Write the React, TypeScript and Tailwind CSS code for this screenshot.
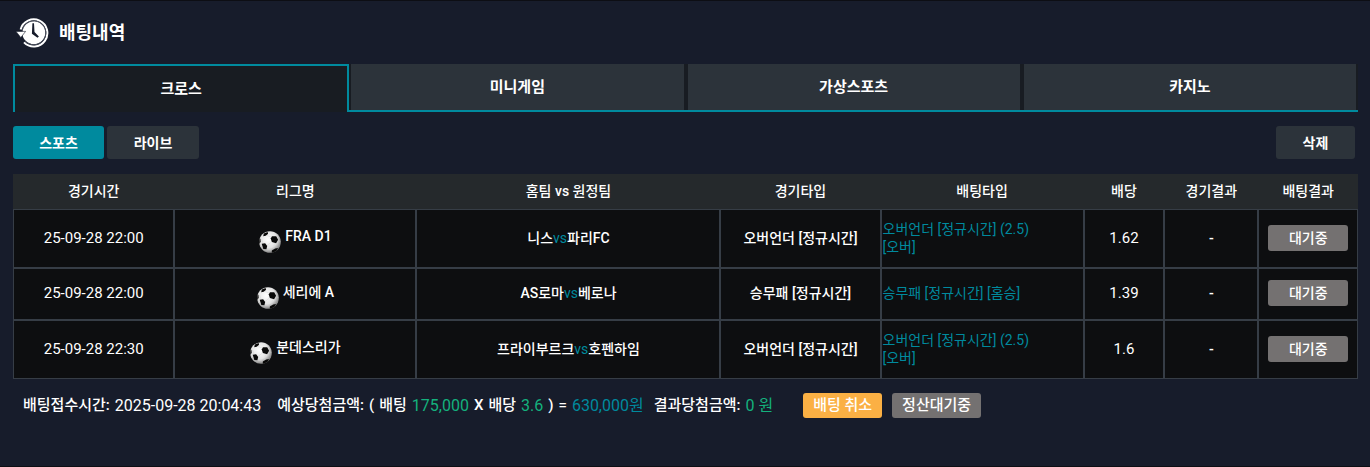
import clsx from "clsx";

type Bet = {
  time: string;
  league: string;
  home: string;
  away: string;
  gameType: string;
  betType: string[];
  odds: string;
  result: string;
  status: string;
};

const tabs = ["크로스", "미니게임", "가상스포츠", "카지노"];

const columns = [
  { label: "경기시간", width: "w-[12%]" },
  { label: "리그명", width: "w-[18%]" },
  { label: "홈팀 vs 원정팀", width: "w-[22.6%]" },
  { label: "경기타입", width: "w-[11.9%]" },
  { label: "배팅타입", width: "w-[15.1%]" },
  { label: "배당", width: "w-[6%]" },
  { label: "경기결과", width: "w-[7%]" },
  { label: "배팅결과", width: "w-[7.4%]" },
];

const bets: Bet[] = [
  {
    time: "25-09-28 22:00",
    league: "FRA D1",
    home: "니스",
    away: "파리FC",
    gameType: "오버언더 [정규시간]",
    betType: ["오버언더 [정규시간] (2.5)", "[오버]"],
    odds: "1.62",
    result: "-",
    status: "대기중",
  },
  {
    time: "25-09-28 22:00",
    league: "세리에 A",
    home: "AS로마",
    away: "베로나",
    gameType: "승무패 [정규시간]",
    betType: ["승무패 [정규시간] [홈승]"],
    odds: "1.39",
    result: "-",
    status: "대기중",
  },
  {
    time: "25-09-28 22:30",
    league: "분데스리가",
    home: "프라이부르크",
    away: "호펜하임",
    gameType: "오버언더 [정규시간]",
    betType: ["오버언더 [정규시간] (2.5)", "[오버]"],
    odds: "1.6",
    result: "-",
    status: "대기중",
  },
];

function HistoryIcon() {
  return (
    <svg width="33" height="30" viewBox="0 0 33 30" fill="none" aria-hidden="true">
      <circle cx="17.8" cy="14.6" r="11.6" fill="#fff" />
      <path d="M4.6 11.4A13.6 13.6 0 1 1 8 24.4" stroke="#fff" strokeWidth="2" />
      <path d="M6 14.6A11.9 11.9 0 1 1 9 22.8" stroke="#4a4f5c" strokeWidth="1" />
      <path d="M0 13.4h9.6L4.8 19.6z" fill="#fff" stroke="#171c2b" strokeWidth=".6" />
      <path d="M16.4 5.2h1.6l.5 8.8 4.4 4.4-1.4 1.4-5.6-4z" fill="#171c2b" />
    </svg>
  );
}

function Football({ id }: { id: string }) {
  return (
    <svg className="mt-1 shrink-0" width="22" height="22" viewBox="0 0 22 22" aria-hidden="true">
      <defs>
        <radialGradient id={`${id}-fill`} cx=".42" cy=".38" r=".62">
          <stop offset="0" stopColor="#fff" />
          <stop offset=".65" stopColor="#e2e2e2" />
          <stop offset="1" stopColor="#858585" />
        </radialGradient>
        <clipPath id={`${id}-clip`}>
          <circle cx="11" cy="11" r="10.8" />
        </clipPath>
      </defs>
      <circle cx="11" cy="11" r="10.8" fill={`url(#${id}-fill)`} />
      <g clipPath={`url(#${id}-clip)`}>
        <g stroke="#d2d2d2" strokeWidth=".5" fill="none">
          <path d="M8 4.5l5.2 2M12.6 10.8L8 14.6M4 12l-1.5-4M15.6 12.4l-1 5.6M8 17.8l4.8 1.4M19.4 9l2 2" />
        </g>
        <g fill="#080808">
          <path d="M13 5.2l4.2.1 1.9 3.4-2 3.5-4.2-1.2-1.2-3.4z" />
          <path d="M2.7 12.8l3.4-.6 2.1 2.9-.8 3.1-3.1-.3z" />
          <path d="M4.8 2.6L8.6.9l.5 1.8-2.4 2-2.5.5z" />
          <path d="M12.8 19.6l3.4-2.1 2.8-.4-2.2 5h-4z" />
          <path d="M0 7.6l1.4.1.3 3.4L0 13z" />
        </g>
      </g>
    </svg>
  );
}

function Tabs() {
  return (
    <nav className="mt-[15px]">
      <ul className="grid grid-cols-4">
        {tabs.map((tab, index) => (
          <li key={tab} className={clsx("flex h-12", index > 0 && "border-b-2 border-[#008a9e]")}>
            <button
              type="button"
              className={clsx(
                "flex-1 text-[15px] font-bold",
                index === 0
                  ? "border-2 border-b-0 border-[#008a9e] bg-[#181c22]"
                  : "border-x-2 border-[#181c22] bg-[#2c333a]",
              )}
            >
              {tab}
            </button>
          </li>
        ))}
      </ul>
    </nav>
  );
}

function BetTable() {
  return (
    <table className="mt-[15px] w-full table-fixed border-separate border-spacing-0 text-sm leading-[18px] font-medium">
      <thead>
        <tr className="h-[35px] bg-[#25292c]">
          {columns.map((column) => (
            <th key={column.label} scope="col" className={clsx("pb-0.5 font-medium", column.width)}>
              {column.label}
            </th>
          ))}
        </tr>
      </thead>
      <tbody className="bg-[#0d0e10] text-center [&_td]:border [&_td]:border-[#363d46] [&_td]:pb-0.5">
        {bets.map((bet, index) => (
          <tr key={bet.league} className={bet.betType.length > 1 ? "h-[59px]" : "h-[52px]"}>
            <td className="text-[15px] font-normal">{bet.time}</td>
            <td>
              <div className="flex items-start justify-center gap-1 pt-[5px]">
                <Football id={`ball-${index}`} />
                <span>{bet.league}</span>
              </div>
            </td>
            <td>
              {bet.home}
              <span className="font-normal text-[#008a9e]">vs</span>
              {bet.away}
            </td>
            <td>{bet.gameType}</td>
            <td className="pl-px text-left font-normal text-[#008a9e]">
              {bet.betType.map((line) => (
                <p key={line}>{line}</p>
              ))}
            </td>
            <td className="text-[15px] font-normal">{bet.odds}</td>
            <td>{bet.result}</td>
            <td>
              <button type="button" className="h-[26px] w-20 rounded-[3px] bg-[#747171]">
                {bet.status}
              </button>
            </td>
          </tr>
        ))}
      </tbody>
    </table>
  );
}

function BetSummary() {
  return (
    <div className="mt-3.5 flex flex-wrap items-center pl-2.5 text-[15px] leading-[25px] font-medium">
      <p className="mr-4 flex gap-[5px] pb-0.5">
        <span>배팅접수시간:</span>
        <span className="text-base leading-[25px] font-normal">2025-09-28 20:04:43</span>
      </p>
      <p className="mr-2.5 flex gap-[5px] pb-0.5">
        <span>예상당첨금액:</span>
        <span>(</span>
        <span>배팅</span>
        <span className="text-base leading-[25px] font-normal text-[#14b17d]">175,000</span>
        <span>X</span>
        <span>배당</span>
        <span className="text-base leading-[25px] font-normal text-[#14b17d]">3.6</span>
        <span>)</span>
        <span>=</span>
        <span className="text-base leading-[25px] font-normal text-[#008a9e]">630,000원</span>
      </p>
      <p className="mr-[30px] flex gap-[5px] pb-0.5">
        <span>결과당첨금액:</span>
        <span className="text-base leading-[25px] font-normal text-[#14b17d]">0 원</span>
      </p>
      <div className="flex gap-2.5 pb-0.5">
        <button type="button" className="h-[25px] rounded-[3px] bg-[#fbb044] px-2.5">
          배팅 취소
        </button>
        <button type="button" className="h-[25px] rounded-[3px] bg-[#747171] px-2.5">
          정산대기중
        </button>
      </div>
    </div>
  );
}

export default function App() {
  return (
    <main className="min-h-screen border-y border-[#0d0e14] bg-[#171c2b] pr-3 pl-[13px] font-[Roboto,'Noto_Sans_CJK_KR',sans-serif] text-white">
      <h1 className="flex items-center gap-2.5 pt-4 pl-[3px] text-lg leading-8 font-bold">
        <HistoryIcon />
        배팅내역
      </h1>
      <Tabs />
      <div className="mt-3.5 flex gap-[3px] pr-[3px] text-sm font-bold">
        <button type="button" className="h-[33px] w-[91px] rounded-[3px] bg-[#008a9e]">
          스포츠
        </button>
        <button type="button" className="h-[33px] w-[92px] rounded-[3px] bg-[#2c333a]">
          라이브
        </button>
        <button type="button" className="ml-auto h-[33px] w-[79px] rounded-[3px] bg-[#2c333a]">
          삭제
        </button>
      </div>
      <BetTable />
      <BetSummary />
    </main>
  );
}
